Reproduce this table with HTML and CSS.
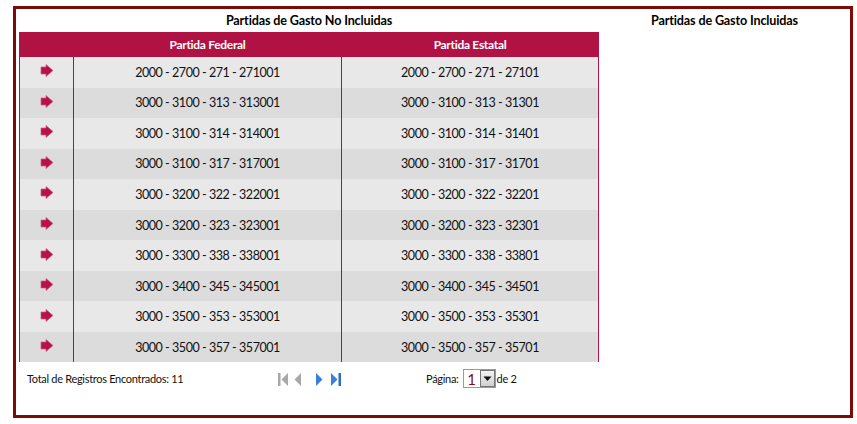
FILE: index.html
```html
<!DOCTYPE html>
<html lang="es">
<head>
<meta charset="utf-8">
<title>Partidas de Gasto</title>
<link rel="stylesheet" href="styles.css">
</head>
<body>
<div class="frame">
  <section class="left">
    <h2 class="title">Partidas de Gasto No Incluidas</h2>
    <div class="grid">
      <div class="row head">
        <div class="cell"></div>
        <div class="cell">Partida Federal</div>
        <div class="cell">Partida Estatal</div>
      </div>
      <div class="row odd"><div class="cell ico"><svg width="14" height="13" viewBox="0 0 14 13"><path d="M1 3H6V0.5L13 6.5L6 12.5V10H1Z" fill="#b5134a" stroke="#d05a80" stroke-width="0.7"/></svg></div><div class="cell">2000 - 2700 - 271 - 271001</div><div class="cell">2000 - 2700 - 271 - 27101</div></div>
      <div class="row even"><div class="cell ico"><svg width="14" height="13" viewBox="0 0 14 13"><path d="M1 3H6V0.5L13 6.5L6 12.5V10H1Z" fill="#b5134a" stroke="#d05a80" stroke-width="0.7"/></svg></div><div class="cell">3000 - 3100 - 313 - 313001</div><div class="cell">3000 - 3100 - 313 - 31301</div></div>
      <div class="row odd"><div class="cell ico"><svg width="14" height="13" viewBox="0 0 14 13"><path d="M1 3H6V0.5L13 6.5L6 12.5V10H1Z" fill="#b5134a" stroke="#d05a80" stroke-width="0.7"/></svg></div><div class="cell">3000 - 3100 - 314 - 314001</div><div class="cell">3000 - 3100 - 314 - 31401</div></div>
      <div class="row even"><div class="cell ico"><svg width="14" height="13" viewBox="0 0 14 13"><path d="M1 3H6V0.5L13 6.5L6 12.5V10H1Z" fill="#b5134a" stroke="#d05a80" stroke-width="0.7"/></svg></div><div class="cell">3000 - 3100 - 317 - 317001</div><div class="cell">3000 - 3100 - 317 - 31701</div></div>
      <div class="row odd"><div class="cell ico"><svg width="14" height="13" viewBox="0 0 14 13"><path d="M1 3H6V0.5L13 6.5L6 12.5V10H1Z" fill="#b5134a" stroke="#d05a80" stroke-width="0.7"/></svg></div><div class="cell">3000 - 3200 - 322 - 322001</div><div class="cell">3000 - 3200 - 322 - 32201</div></div>
      <div class="row even"><div class="cell ico"><svg width="14" height="13" viewBox="0 0 14 13"><path d="M1 3H6V0.5L13 6.5L6 12.5V10H1Z" fill="#b5134a" stroke="#d05a80" stroke-width="0.7"/></svg></div><div class="cell">3000 - 3200 - 323 - 323001</div><div class="cell">3000 - 3200 - 323 - 32301</div></div>
      <div class="row odd"><div class="cell ico"><svg width="14" height="13" viewBox="0 0 14 13"><path d="M1 3H6V0.5L13 6.5L6 12.5V10H1Z" fill="#b5134a" stroke="#d05a80" stroke-width="0.7"/></svg></div><div class="cell">3000 - 3300 - 338 - 338001</div><div class="cell">3000 - 3300 - 338 - 33801</div></div>
      <div class="row even"><div class="cell ico"><svg width="14" height="13" viewBox="0 0 14 13"><path d="M1 3H6V0.5L13 6.5L6 12.5V10H1Z" fill="#b5134a" stroke="#d05a80" stroke-width="0.7"/></svg></div><div class="cell">3000 - 3400 - 345 - 345001</div><div class="cell">3000 - 3400 - 345 - 34501</div></div>
      <div class="row odd"><div class="cell ico"><svg width="14" height="13" viewBox="0 0 14 13"><path d="M1 3H6V0.5L13 6.5L6 12.5V10H1Z" fill="#b5134a" stroke="#d05a80" stroke-width="0.7"/></svg></div><div class="cell">3000 - 3500 - 353 - 353001</div><div class="cell">3000 - 3500 - 353 - 35301</div></div>
      <div class="row even"><div class="cell ico"><svg width="14" height="13" viewBox="0 0 14 13"><path d="M1 3H6V0.5L13 6.5L6 12.5V10H1Z" fill="#b5134a" stroke="#d05a80" stroke-width="0.7"/></svg></div><div class="cell">3000 - 3500 - 357 - 357001</div><div class="cell">3000 - 3500 - 357 - 35701</div></div>
    </div>
    <div class="footer">
      <div class="total">Total de Registros Encontrados: 11</div>
      <div class="pager">
        <svg class="pg" width="12" height="15" viewBox="0 0 12 15"><rect x="1" y="1" width="2.5" height="13" fill="#a8a8a8"/><path d="M11 1V14L4.5 7.5Z" fill="#a8a8a8"/></svg>
        <svg class="pg gap1" width="8" height="15" viewBox="0 0 8 15"><path d="M7 1V14L0.5 7.5Z" fill="#a8a8a8"/></svg>
        <svg class="pg gap2" width="8" height="15" viewBox="0 0 8 15"><path d="M1 1V14L7.5 7.5Z" fill="#3a7fd8"/></svg>
        <svg class="pg gap3" width="12" height="15" viewBox="0 0 12 15"><path d="M1 1V14L7.5 7.5Z" fill="#3a7fd8"/><rect x="8.5" y="1" width="2.5" height="13" fill="#2f6cc4"/></svg>
      </div>
      <div class="page">
        <span>Página:</span>
        <span class="select"><span class="val">1</span><span class="btn"><svg width="9" height="6" viewBox="0 0 9 6"><path d="M0.5 0.5H8.5L4.5 5Z" fill="#111"/></svg></span></span>
        <span>de 2</span>
      </div>
    </div>
  </section>
  <section class="right">
    <h2 class="title">Partidas de Gasto Incluidas</h2>
  </section>
</div>
</body>
</html>
```

FILE: styles.css
```css
html, body {
  margin: 0;
  padding: 0;
  background: #fff;
}
body {
  font-family: Lato, "Open Sans", sans-serif;
  color: #111;
}
.frame {
  box-sizing: border-box;
  margin: 6px 0 0 13px;
  width: 840px;
  height: 412px;
  border: 3px solid #7e0a0a;
  display: flex;
  padding-left: 3px;
}
.left {
  width: 580px;
  display: flex;
  flex-direction: column;
}
.right {
  flex: 1;
}
.title {
  margin: 0;
  height: 23px;
  font-size: 12.6px;
  font-weight: bold;
  letter-spacing: -0.15px;
  text-align: center;
  line-height: 23px;
  color: #000;
}
.grid {
  border-left: 1px solid #b0124a;
  border-right: 1px solid #b0124a;
}
.row {
  display: grid;
  grid-template-columns: 53px 268px 1fr;
  height: 30.55px;
  align-items: stretch;
}
.cell {
  display: flex;
  align-items: center;
  justify-content: center;
  font-size: 12.5px;
  letter-spacing: -0.45px;
  color: #111;
}
.row .cell + .cell {
  border-left: 1px solid #9c1a44;
}
.row.head {
  height: 25px;
  background: #b01244;
}
.row.head .cell {
  color: #fff;
  font-weight: bold;
  font-size: 12px;
  letter-spacing: -0.3px;
}
.row.head .cell + .cell {
  border-left-color: #b01244;
}
.odd { background: #e8e8e8; }
.even { background: #dcdcdc; }
.ico svg { display: block; margin-top: -3px; margin-left: 1px; }
.footer {
  display: flex;
  align-items: center;
  height: 33px;
  font-size: 11px;
  letter-spacing: -0.3px;
}
.total {
  width: 258px;
  padding-left: 8px;
  box-sizing: border-box;
}
.pager {
  width: 149px;
  display: flex;
  align-items: center;
  padding-top: 1px;
}
.pg { display: block; }
.gap1 { margin-left: 5px; }
.gap2 { margin-left: 13px; }
.gap3 { margin-left: 7px; }
.page {
  display: flex;
  align-items: center;
  gap: 4px;
}
.select {
  display: flex;
  box-sizing: border-box;
  width: 33px;
  height: 19px;
  border: 1px solid #9a9a9a;
  background: #fff;
  margin-right: -3px;
}
.val {
  flex: 1;
  display: flex;
  align-items: center;
  justify-content: center;
  color: #8a0a0a;
  font-size: 15px;
  letter-spacing: 0;
}
.btn {
  width: 15px;
  display: flex;
  align-items: center;
  justify-content: center;
  background: linear-gradient(#f4f4f4, #d0d0d0);
  border: 1px solid #777;
  box-sizing: border-box;
}
```
